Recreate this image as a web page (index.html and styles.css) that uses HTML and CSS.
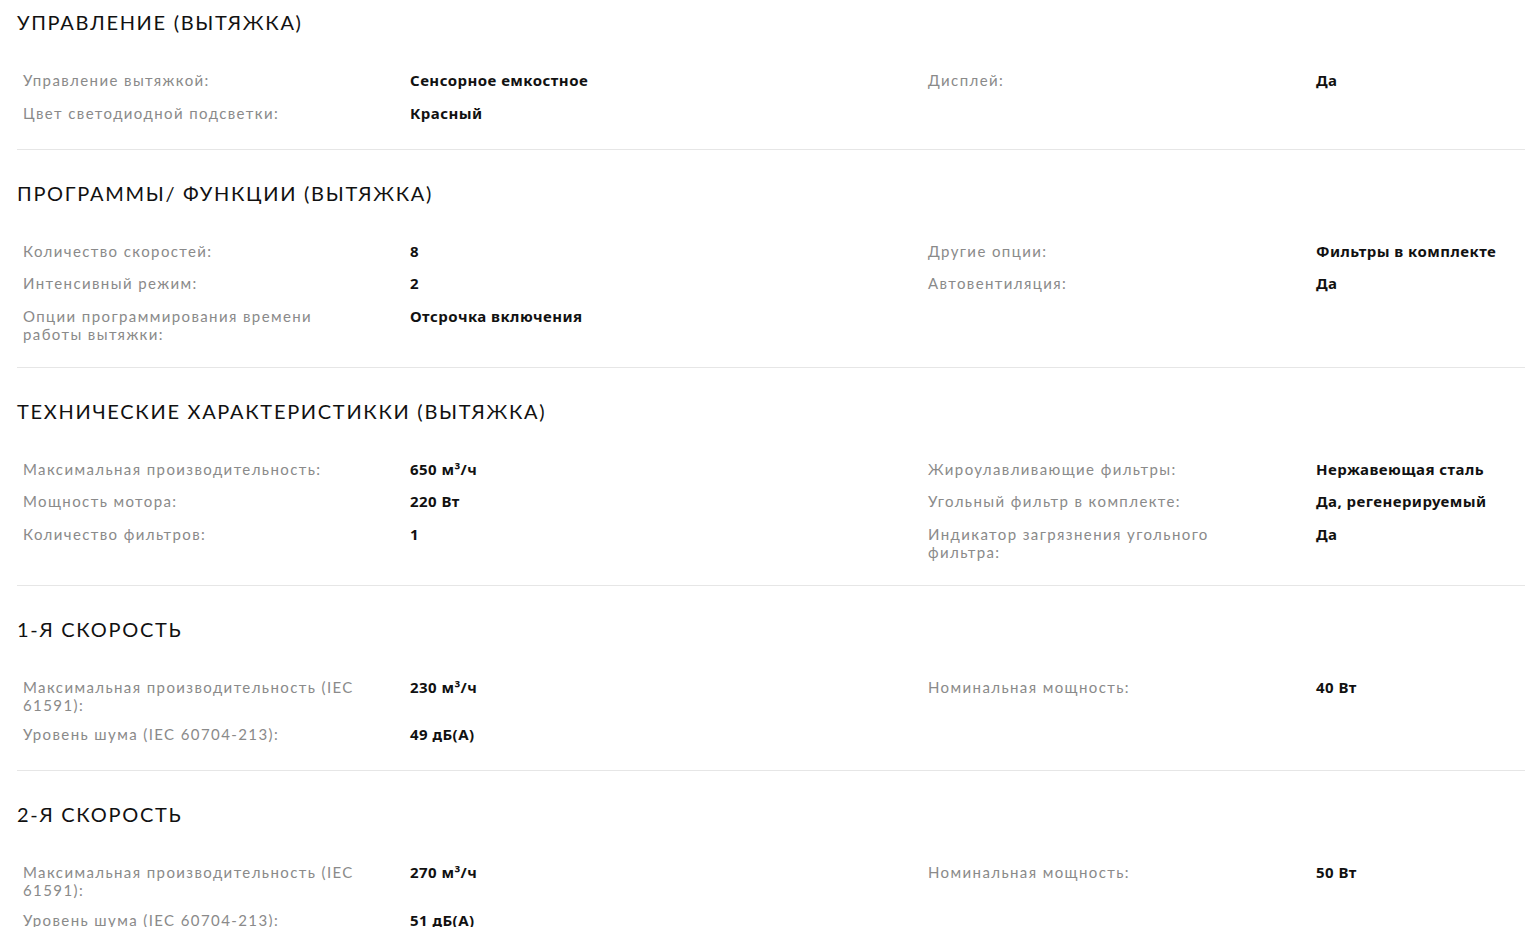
FILE: index.html
```html
<!DOCTYPE html>
<html lang="ru">
<head>
<meta charset="utf-8">
<title>Характеристики</title>
<link rel="stylesheet" href="styles.css">
</head>
<body>
<div class="specs">
  <section class="group">
    <h2 class="group-title">УПРАВЛЕНИЕ (ВЫТЯЖКА)</h2>
    <div class="grid">
      <div class="label">Управление вытяжкой:</div><div class="value">Сенсорное емкостное</div>
      <div class="label">Дисплей:</div><div class="value">Да</div>
      <div class="label">Цвет светодиодной подсветки:</div><div class="value">Красный</div>
    </div>
  </section>
  <section class="group">
    <h2 class="group-title">ПРОГРАММЫ/ ФУНКЦИИ (ВЫТЯЖКА)</h2>
    <div class="grid">
      <div class="label">Количество скоростей:</div><div class="value">8</div>
      <div class="label">Другие опции:</div><div class="value">Фильтры в комплекте</div>
      <div class="label">Интенсивный режим:</div><div class="value">2</div>
      <div class="label">Автовентиляция:</div><div class="value">Да</div>
      <div class="label">Опции программирования времени работы вытяжки:</div><div class="value">Отсрочка включения</div>
    </div>
  </section>
  <section class="group">
    <h2 class="group-title">ТЕХНИЧЕСКИЕ ХАРАКТЕРИСТИККИ (ВЫТЯЖКА)</h2>
    <div class="grid">
      <div class="label">Максимальная производительность:</div><div class="value">650 м³/ч</div>
      <div class="label">Жироулавливающие фильтры:</div><div class="value">Нержавеющая сталь</div>
      <div class="label">Мощность мотора:</div><div class="value">220 Вт</div>
      <div class="label">Угольный фильтр в комплекте:</div><div class="value">Да, регенерируемый</div>
      <div class="label">Количество фильтров:</div><div class="value">1</div>
      <div class="label">Индикатор загрязнения угольного фильтра:</div><div class="value">Да</div>
    </div>
  </section>
  <section class="group">
    <h2 class="group-title">1-Я СКОРОСТЬ</h2>
    <div class="grid">
      <div class="label">Максимальная производительность (IEC 61591):</div><div class="value">230 м³/ч</div>
      <div class="label">Номинальная мощность:</div><div class="value">40 Вт</div>
      <div class="label">Уровень шума (IEC 60704-213):</div><div class="value">49 дБ(A)</div>
    </div>
  </section>
  <section class="group">
    <h2 class="group-title">2-Я СКОРОСТЬ</h2>
    <div class="grid">
      <div class="label">Максимальная производительность (IEC 61591):</div><div class="value">270 м³/ч</div>
      <div class="label">Номинальная мощность:</div><div class="value">50 Вт</div>
      <div class="label">Уровень шума (IEC 60704-213):</div><div class="value">51 дБ(A)</div>
    </div>
  </section>
</div>
</body>
</html>
```
FILE: styles.css
```css
html, body {
  margin: 0;
  padding: 0;
  background: #ffffff;
}

body {
  font-family: "Lato", "Open Sans", sans-serif;
  color: #111111;
}

.specs {
  padding-left: 17px;
}

.group {
  padding: 31px 0 24px;
  border-bottom: 1px solid #e6e6e6;
}

.group:first-child {
  padding-top: 10px;
}

.group-title {
  margin: 0 0 35px;
  font-size: 20px;
  line-height: 24px;
  font-weight: 400;
  letter-spacing: 1.7px;
  color: #111111;
}

.grid {
  display: grid;
  grid-template-columns: 387px 518px 388px 1fr;
  row-gap: 9.5px;
  align-items: start;
}

.label {
  padding: 2px 34px 0 6px;
  font-size: 15px;
  line-height: 18px;
  letter-spacing: 1.4px;
  color: #8a8a8a;
}

.value {
  padding-left: 6px;
  font-family: "Noto Sans", "Lato", sans-serif;
  font-size: 15px;
  line-height: 23px;
  font-weight: 700;
  letter-spacing: 0.45px;
  color: #111111;
}
```
